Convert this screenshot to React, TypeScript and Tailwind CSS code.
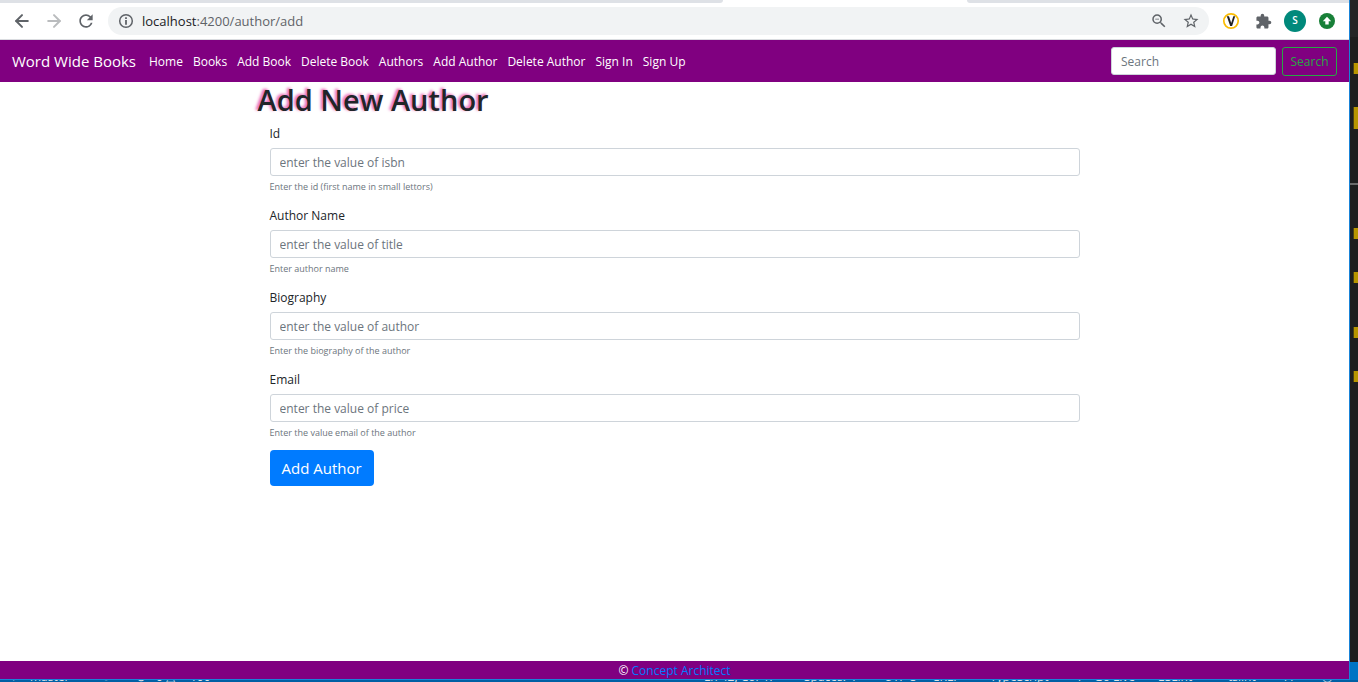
import React from "react";
import { ArrowLeft, ArrowRight } from "lucide-react";
import { MdRefresh, MdZoomOut, MdStarBorder, MdExtension } from "react-icons/md";

const links = ["Home", "Books", "Add Book", "Delete Book", "Authors", "Add Author", "Delete Author", "Sign In", "Sign Up"];

const fields = [
  { id: "id", label: "Id", placeholder: "enter the value of isbn", help: "Enter the id (first name in small lettors)" },
  { id: "name", label: "Author Name", placeholder: "enter the value of title", help: "Enter author name" },
  { id: "biography", label: "Biography", placeholder: "enter the value of author", help: "Enter the biography of the author" },
  { id: "email", label: "Email", placeholder: "enter the value of price", help: "Enter the value email of the author" },
];

function BrowserBar() {
  return (
    <header className="bg-white">
      <div className="flex h-[3px] bg-white">
        <div className="w-[723px] rounded-br-[4px] bg-[#dee1e6]" />
        <div className="w-[244px]" />
        <div className="flex-1 rounded-bl-[4px] bg-[#dee1e6]" />
      </div>
      <div className="flex h-[37px] items-center border-b border-[#dadce0] pr-1.5">
        <div className="flex items-center gap-3 px-3">
          <button aria-label="Back" className="text-[#5f6368]"><ArrowLeft size={20} strokeWidth={2.4} /></button>
          <button aria-label="Forward" className="text-[#babcbe]"><ArrowRight size={20} strokeWidth={2.4} /></button>
          <button aria-label="Reload" className="text-[#5f6368]"><MdRefresh size={20} /></button>
        </div>
        <div className="flex h-7 flex-1 items-center rounded-full bg-[#f1f3f4] pl-2.5 pr-0.5 text-[#5f6368]">
          <svg width="16" height="16" viewBox="0 0 16 16" aria-hidden="true">
            <circle cx="8" cy="8" r="6.3" fill="none" stroke="currentColor" strokeWidth="1.5" />
            <path d="M7.1 4.2h1.8v1.7H7.1zM7.1 7h1.8v4.8H7.1z" fill="currentColor" />
          </svg>
          <span className="flex-1 pl-2 pt-0.5 text-[13px] text-[#5f6368]"><span className="text-[#202124]">localhost</span>:4200/author/add</span>
          <button aria-label="Zoom" className="flex w-8 justify-center"><MdZoomOut size={18} /></button>
          <button aria-label="Bookmark this page" className="flex w-8 justify-center"><MdStarBorder size={18} /></button>
        </div>
        <div className="flex items-center pl-1.5">
          <button aria-label="V extension" className="flex w-8 justify-center">
            <svg width="18" height="18" viewBox="0 0 18 18">
              <circle cx="9" cy="9" r="7.2" fill="#fff" stroke="#fbbc04" strokeWidth="1.7" />
              <path d="M4.8 4.2h2.2L9.2 11l2.1-6.8h1.9L10.1 14H8.2z" fill="#222" />
            </svg>
          </button>
          <button aria-label="Extensions" className="flex w-8 justify-center text-[#5f6368]"><MdExtension size={17} /></button>
          <button aria-label="Profile" className="flex w-8 justify-center">
            <span className="flex size-[22px] items-center justify-center rounded-full bg-[#00897b] text-[10px] font-semibold text-white">S</span>
          </button>
          <button aria-label="Update" className="flex w-8 justify-center">
            <svg width="16" height="16" viewBox="0 0 16 16">
              <circle cx="8" cy="8" r="8" fill="#188038" />
              <path d="M8 3.8 12.2 8.2H9.7v3.3H6.3V8.2H3.8z" fill="#fff" />
            </svg>
          </button>
        </div>
      </div>
    </header>
  );
}

function NavBar() {
  return (
    <nav className="flex h-[42px] items-center bg-[#800080] px-3 text-white">
      <a href="#" className="mr-2 whitespace-nowrap text-[15px]">Word Wide Books</a>
      {links.map((l) => (
        <a key={l} href="#" className="whitespace-nowrap px-[5px] pt-0.5">{l}</a>
      ))}
      <form className="ml-auto flex gap-1.5" onSubmit={(e) => e.preventDefault()}>
        <input type="search" aria-label="Search" placeholder="Search" className="h-7 w-[165px] rounded-[3px] border border-[#ced4da] bg-white px-[9px] pt-0.5 text-[#495057] placeholder:text-[#6c757d]" />
        <button className="h-[29px] w-[55px] rounded-[3px] border border-[#28a745] pt-0.5 text-[#28a745]">Search</button>
      </form>
    </nav>
  );
}

function AuthorForm() {
  return (
    <form className="px-3" onSubmit={(e) => e.preventDefault()}>
      <div className="flex flex-col gap-[11px]">
        {fields.map((f) => (
          <div key={f.id} className="flex flex-col">
            <label htmlFor={f.id} className="mb-1 leading-5">{f.label}</label>
            <input id={f.id} placeholder={f.placeholder} aria-describedby={f.id + "-help"} className="h-7 w-full rounded-[3px] border border-[#ced4da] bg-white px-[9px] text-[#495057] placeholder:text-[#6c757d]" />
            <small id={f.id + "-help"} className="mt-[3px] text-[9px] leading-4 text-[#6c757d]">{f.help}</small>
          </div>
        ))}
      </div>
      <button className="mt-[9px] h-9 rounded-[4px] bg-[#007bff] px-3 text-[15px] text-white">Add Author</button>
    </form>
  );
}

function EditorEdge() {
  return (
    <div className="flex w-2 flex-col bg-[#1e1e1e]" aria-hidden="true">
      <div className="h-[37px] bg-[#252526]" />
      <div className="ml-[3px] mt-[26px] h-[11px] border-l border-[#4d4212] bg-[#b89500]" />
      <div className="ml-[3px] mt-[33px] h-[22px] border-l border-[#4d4212] bg-[#b89500]" />
      <div className="mt-[54px] h-0.5 bg-[#6b6b6b]" />
      <div className="ml-[3px] mt-[43px] h-[11px] border-l border-[#4d4212] bg-[#b89500]" />
      <div className="ml-[3px] mt-[33px] h-[11px] border-l border-[#4d4212] bg-[#b89500]" />
      <div className="ml-[3px] mt-11 h-[11px] border-l border-[#4d4212] bg-[#b89500]" />
      <div className="ml-[3px] mt-[33px] h-[11px] border-l border-[#4d4212] bg-[#b89500]" />
      <div className="mt-auto h-[18px] bg-[#0074c4]" />
    </div>
  );
}

function StatusBar() {
  return (
    <div className="flex h-0.5 items-end justify-between overflow-hidden whitespace-nowrap bg-[#0060a4] pl-2.5 pr-[26px] text-xs leading-[10px] text-[#dfe4e8]">
      <div className="flex">
        <span className="w-5">⑂</span>
        <span className="w-[72px]">master*</span>
        <span className="w-[34px]">⟳</span>
        <span className="w-5">⊗</span>
        <span className="w-2.5">0</span>
        <span className="w-6">△</span>
        <span>100</span>
      </div>
      <div className="flex">
        <span className="w-[100px]">Ln 42, Col 47</span>
        <span className="w-20">Spaces: 4</span>
        <span className="w-12">UTF-8</span>
        <span className="w-[58px]">CRLF</span>
        <span className="w-[88px]">TypeScript</span>
        <span className="w-4">ı</span>
        <span className="w-16">Go Live</span>
        <span className="w-12">ESLint</span>
        <span className="w-[22px]">▭</span>
        <span className="w-14">tslint</span>
        <span className="w-[38px]">ı ı</span>
        <span>◡</span>
      </div>
    </div>
  );
}

export default function App() {
  return (
    <div className="flex h-screen flex-col overflow-hidden font-['Open_Sans','Noto_Sans',sans-serif] text-xs text-[#212529]">
      <div className="flex min-h-0 flex-1">
        <div className="flex min-w-0 flex-1 flex-col border-b border-r border-[#1883d7] bg-white">
          <BrowserBar />
          <NavBar />
          <main className="mx-auto w-full max-w-[834px] flex-1">
            <h1 className="pb-1.5 text-[29px] font-semibold leading-9 [text-shadow:-2px_-1px_3px_#e85ab0]">Add New Author</h1>
            <AuthorForm />
          </main>
          <footer className="bg-[#800080] pt-0.5 text-center leading-4 text-white">
            © <a href="#" className="text-[#007bff]">Concept Architect</a>
          </footer>
        </div>
        <EditorEdge />
      </div>
      <StatusBar />
    </div>
  );
}
